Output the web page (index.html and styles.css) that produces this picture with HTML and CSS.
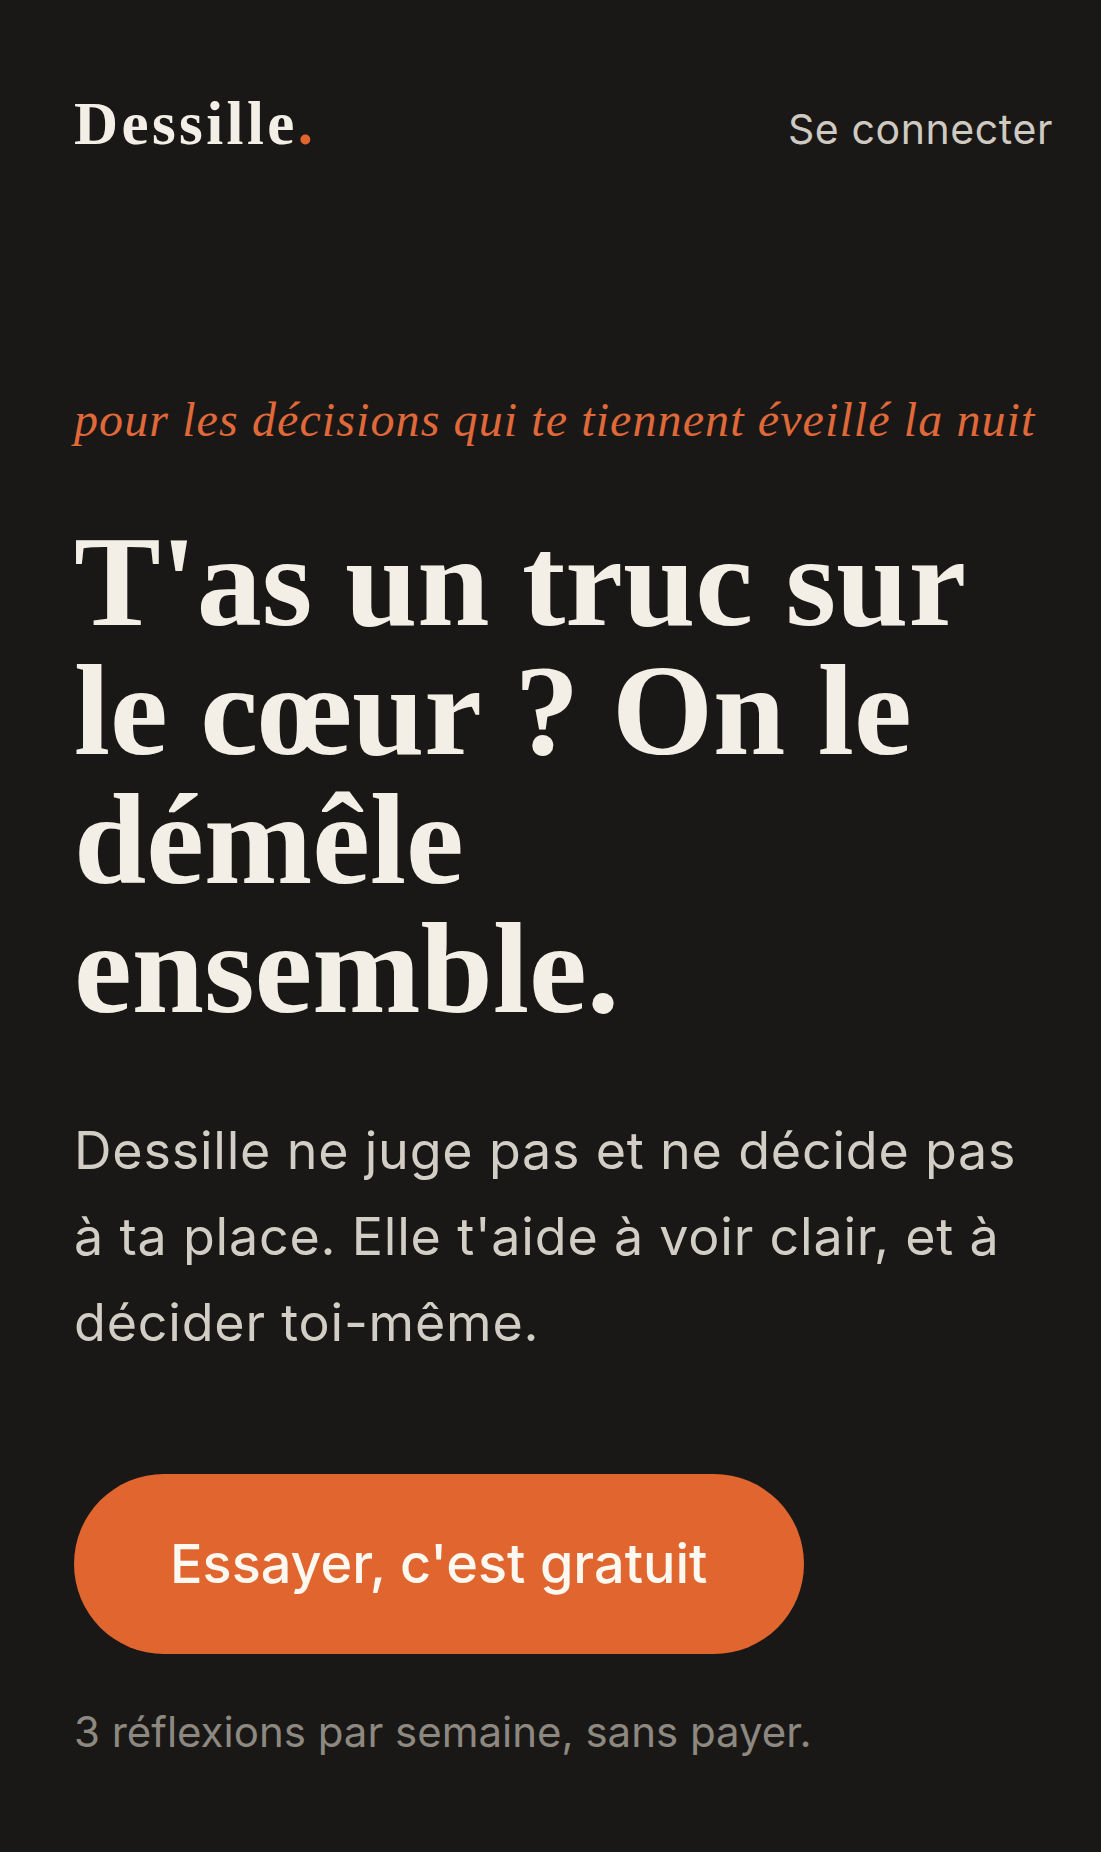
FILE: index.html
```html
<!DOCTYPE html>
<html lang="fr">
<head>
<meta charset="utf-8">
<title>Dessille</title>
<link rel="stylesheet" href="styles.css">
</head>
<body>
<div class="page">
  <header class="header">
    <a class="logo" href="#">Dessille<span class="logo-dot">.</span></a>
    <a class="login" href="#">Se connecter</a>
  </header>
  <main class="hero">
    <p class="tagline">pour les décisions qui te tiennent éveillé la nuit</p>
    <h1 class="title">T'as un truc sur le cœur&nbsp;? On le démêle ensemble.</h1>
    <p class="lead">Dessille ne juge pas et ne décide pas à ta place. Elle t'aide à voir clair, et à décider toi-même.</p>
    <a class="cta" href="#">Essayer, c'est gratuit</a>
    <p class="note">3 réflexions par semaine, sans payer.</p>
  </main>
</div>
</body>
</html>
```
FILE: styles.css
```css
html, body {
  margin: 0;
  padding: 0;
  background: #1a1816;
}
body {
  min-height: 1852px;
  font-family: Inter, "Liberation Sans", sans-serif;
}
.page {
  padding: 93px 48px 0 74px;
}
.header {
  display: flex;
  justify-content: space-between;
  align-items: baseline;
}
.logo {
  font-family: "Liberation Serif", serif;
  font-weight: 700;
  font-size: 61px;
  line-height: 1;
  letter-spacing: 3.4px;
  color: #f3efe6;
  text-decoration: none;
}
.logo-dot {
  color: #e0652f;
}
.login {
  font-size: 41px;
  letter-spacing: 0.6px;
  color: #cfcac1;
  text-decoration: none;
}
.hero {
  display: flex;
  flex-direction: column;
  align-items: flex-start;
}
.tagline {
  margin: 237px 0 0;
  font-family: "Liberation Serif", serif;
  font-style: italic;
  font-size: 48px;
  line-height: 1.2;
  letter-spacing: 1.1px;
  color: #e0693a;
}
.title {
  margin: 68px 0 0;
  max-width: 935px;
  font-family: "Liberation Serif", serif;
  font-weight: 700;
  font-size: 130px;
  line-height: 129px;
  color: #f3efe6;
}
.lead {
  margin: 75px 0 0;
  max-width: 960px;
  font-size: 52px;
  line-height: 86px;
  letter-spacing: 0.8px;
  color: #d3cec5;
}
.cta {
  margin-top: 108px;
  height: 180px;
  padding: 0 96px;
  display: flex;
  align-items: center;
  border-radius: 90px;
  background: #e0652f;
  color: #fdf8f0;
  font-size: 54px;
  font-weight: 500;
  text-decoration: none;
}
.note {
  margin: 50px 0 0;
  font-size: 42px;
  line-height: 56px;
  color: #8d8880;
}
```
